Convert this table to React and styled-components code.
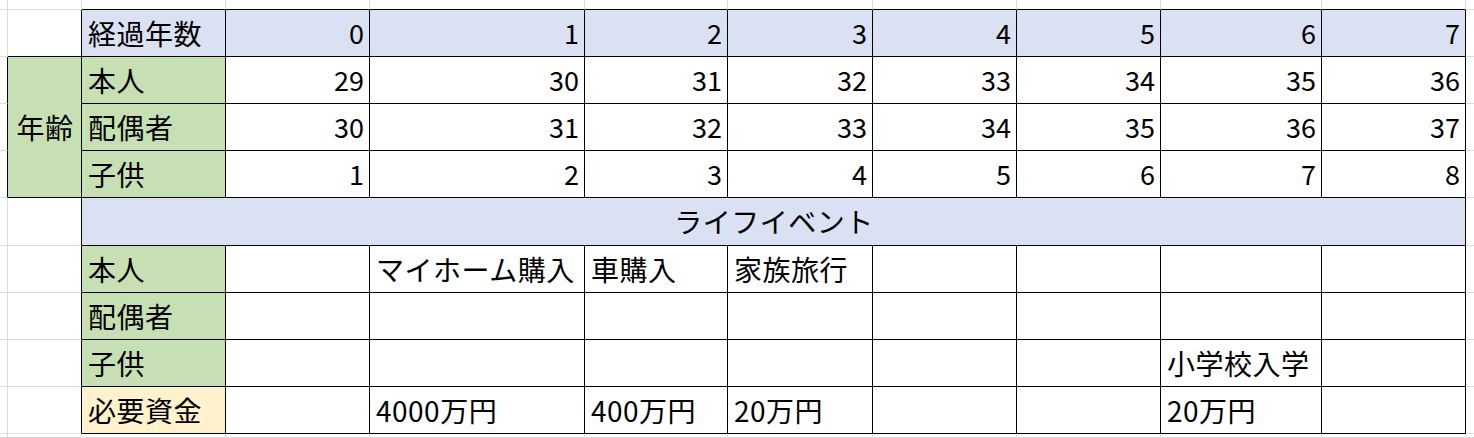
import styled, { createGlobalStyle } from "styled-components";

const GRID = "#dadada";
const BLUE = "#d9e1f2";
const GREEN = "#c6e0b4";
const YELLOW = "#fff2cc";

const colWidths = [8, 74, 144, 144, 215, 143, 145, 144, 144, 161, 144, 8];
const rowHeights = [10, 47, 47, 47, 47, 48, 47, 47, 47, 47, 4];

const years = [0, 1, 2, 3, 4, 5, 6, 7];

const ages = [
  { label: "本人", values: [29, 30, 31, 32, 33, 34, 35, 36] },
  { label: "配偶者", values: [30, 31, 32, 33, 34, 35, 36, 37] },
  { label: "子供", values: [1, 2, 3, 4, 5, 6, 7, 8] },
];

const events = [
  { label: "本人", bg: GREEN, values: ["", "マイホーム購入", "車購入", "家族旅行", "", "", "", ""] },
  { label: "配偶者", bg: GREEN, values: ["", "", "", "", "", "", "", ""] },
  { label: "子供", bg: GREEN, values: ["", "", "", "", "", "", "小学校入学", ""] },
  { label: "必要資金", bg: YELLOW, values: ["", "4000万円", "400万円", "20万円", "", "", "20万円", ""] },
];

const GlobalStyle = createGlobalStyle`
  html, body {
    margin: 0;
    padding: 0;
    background: #ffffff;
  }
  body {
    font-family: "Noto Sans CJK JP", "Noto Sans", sans-serif;
  }
`;

const Sheet = styled.div`
  display: grid;
  grid-template-columns: ${colWidths.map((w) => `${w}px`).join(" ")};
  grid-template-rows: ${rowHeights.map((h) => `${h}px`).join(" ")};
  width: 1474px;
  height: 438px;
  overflow: hidden;
  background: #ffffff;
`;

// empty sheet cell outside the table, only gridlines
const Gutter = styled.div`
  box-sizing: border-box;
  border-right: 1px solid ${(p) => (p.$r ? "#000" : GRID)};
  border-bottom: 1px solid ${(p) => (p.$b ? "#000" : GRID)};
  ${(p) => p.$last && "border-right: none;"}
`;

const Cell = styled.div`
  box-sizing: border-box;
  display: flex;
  align-items: center;
  justify-content: ${(p) =>
    p.$align === "right" ? "flex-end" : p.$align === "center" ? "center" : "flex-start"};
  grid-column: span ${(p) => p.$span || 1};
  grid-row: span ${(p) => p.$rows || 1};
  padding: 0 5px 1px 6px;
  background: ${(p) => p.$bg || "#ffffff"};
  border-right: 1px solid #000;
  border-bottom: 1px solid #000;
  font-size: 27px;
  line-height: 1;
  color: #000;
  white-space: nowrap;
`;

const Label = styled.span`
  font-size: 28px;
  letter-spacing: 0.5px;
`;

export default function App() {
  return (
    <>
      <GlobalStyle />
      <Sheet>
        {/* top strip above the table */}
        {colWidths.map((_, i) => (
          <Gutter key={`t${i}`} $b={i >= 2 && i <= 10} $last={i === 11} />
        ))}

        {/* 経過年数 */}
        <Gutter />
        <Gutter $r $b />
        <Cell $bg={BLUE}>
          <Label>経過年数</Label>
        </Cell>
        {years.map((y) => (
          <Cell key={`y${y}`} $bg={BLUE} $align="right">
            {y}
          </Cell>
        ))}
        <Gutter $last />

        {/* 年齢 */}
        {ages.map((row, ri) => (
          <Row key={row.label}>
            <Gutter $r />
            {ri === 0 && (
              <Cell $rows={3} $bg={GREEN} $align="center">
                <Label>年齢</Label>
              </Cell>
            )}
            <Cell $bg={GREEN}>
              <Label>{row.label}</Label>
            </Cell>
            {row.values.map((v, i) => (
              <Cell key={i} $align="right">
                {v}
              </Cell>
            ))}
            <Gutter $last />
          </Row>
        ))}

        {/* ライフイベント */}
        <Gutter />
        <Gutter $r />
        <Cell $span={9} $bg={BLUE} $align="center">
          <Label>ライフイベント</Label>
        </Cell>
        <Gutter $last />

        {events.map((row) => (
          <Row key={`e${row.label}`}>
            <Gutter />
            <Gutter $r />
            <Cell $bg={row.bg}>
              <Label>{row.label}</Label>
            </Cell>
            {row.values.map((v, i) => (
              <Cell key={i}>
                <Label>{v}</Label>
              </Cell>
            ))}
            <Gutter $last />
          </Row>
        ))}

        {/* bottom strip */}
        {colWidths.map((_, i) => (
          <Gutter key={`b${i}`} $last={i === 11} />
        ))}
      </Sheet>
    </>
  );
}

function Row({ children }) {
  return <>{children}</>;
}
